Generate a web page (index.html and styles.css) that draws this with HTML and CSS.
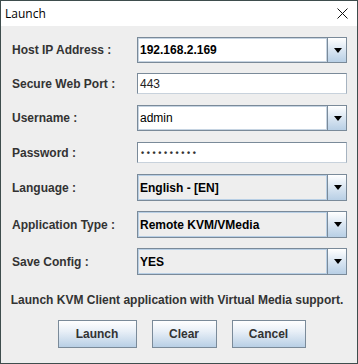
FILE: index.html
```html
<!DOCTYPE html>
<html lang="en">
<head>
    <meta charset="UTF-8">
    <title>Launch</title>
    <link rel="stylesheet" href="styles.css">
</head>
<body>
    <div class="window">
        <div class="titlebar">
            <span class="title">Launch</span>
            <svg class="close" width="11" height="11" viewBox="0 0 11 11">
                <path d="M0.5 0.5 L10.5 10.5 M10.5 0.5 L0.5 10.5" stroke="#111" stroke-width="1" fill="none"/>
            </svg>
        </div>
        <div class="content">
            <div class="row row-combo r1">
                <label>Host IP Address :</label>
                <div class="combo editable">
                    <div class="combo-text bold">192.168.2.169</div>
                    <div class="combo-btn"><span class="arrow"></span></div>
                </div>
            </div>
            <div class="row row-field r2">
                <label>Secure Web Port :</label>
                <div class="field">443</div>
            </div>
            <div class="row row-combo r3">
                <label>Username :</label>
                <div class="combo editable">
                    <div class="combo-text">admin</div>
                    <div class="combo-btn"><span class="arrow"></span></div>
                </div>
            </div>
            <div class="row row-field r4">
                <label>Password :</label>
                <div class="field password">••••••••••</div>
            </div>
            <div class="row row-select r5">
                <label>Language :</label>
                <div class="combo">
                    <div class="combo-text bold">English - [EN]</div>
                    <div class="combo-btn"><span class="arrow"></span></div>
                </div>
            </div>
            <div class="row row-select r6">
                <label>Application Type :</label>
                <div class="combo">
                    <div class="combo-text bold">Remote KVM/VMedia</div>
                    <div class="combo-btn"><span class="arrow"></span></div>
                </div>
            </div>
            <div class="row row-select r7">
                <label>Save Config :</label>
                <div class="combo">
                    <div class="combo-text bold">YES</div>
                    <div class="combo-btn"><span class="arrow"></span></div>
                </div>
            </div>

            <p class="message">Launch KVM Client application with Virtual Media support.</p>

            <div class="buttons">
                <button class="btn btn-launch">Launch</button>
                <button class="btn btn-clear">Clear</button>
                <button class="btn btn-cancel">Cancel</button>
            </div>
        </div>
    </div>
</body>
</html>
```
FILE: styles.css
```css
* {
    box-sizing: border-box;
}

body {
    margin: 0;
    font-family: "Liberation Sans", Arial, sans-serif;
    font-size: 12px;
}

.window {
    width: 358px;
    height: 364px;
    border: 1px solid #3e4d4d;
    background: #eeeeee;
    display: flex;
    flex-direction: column;
}

.titlebar {
    height: 25px;
    background: #ffffff;
    display: flex;
    align-items: center;
    justify-content: space-between;
    padding: 0 9px 0 4px;
}

.title {
    font-family: "Open Sans", "Noto Sans", sans-serif;
    font-size: 12px;
    color: #000;
}

.content {
    padding: 11px 10px 0 11px;
}

.row {
    display: flex;
    align-items: center;
}

.row label {
    width: 125px;
    font-weight: bold;
    color: #333333;
}

.r2 { margin-top: 10px; }
.r3 { margin-top: 11px; }
.r4 { margin-top: 11px; }
.r5 { margin-top: 11px; }
.r6 { margin-top: 10px; }
.r7 { margin-top: 10px; }

.combo {
    flex: 1;
    height: 27px;
    border: 1px solid #7a8a99;
    display: flex;
}

.row-combo .combo {
    height: 26px;
}

.combo-text {
    flex: 1;
    display: flex;
    align-items: center;
    padding-left: 2px;
    color: #000;
    background: #eeeeee;
    box-shadow: inset 0 0 0 1px #b8cfe5;
}

.combo.editable .combo-text {
    background: #ffffff;
    box-shadow: inset 0 0 0 1px #c6d4e2;
}

.bold {
    font-weight: bold;
}

.combo-btn {
    width: 19px;
    border-left: 1px solid #7a8a99;
    background: linear-gradient(#ffffff, #dde8f3 45%, #b8cfe5);
    display: flex;
    align-items: center;
    justify-content: center;
}

.arrow {
    width: 0;
    height: 0;
    border-left: 4.5px solid transparent;
    border-right: 4.5px solid transparent;
    border-top: 5px solid #000;
    margin-left: 1px;
}

.field {
    flex: 1;
    height: 21px;
    background: #ffffff;
    border: 1px solid #7a8a99;
    border-right-color: #a6b3c0;
    border-bottom-color: #c8d2dc;
    display: flex;
    align-items: center;
    padding-left: 2px;
    color: #222;
}

.password {
    font-size: 9px;
    font-weight: bold;
    letter-spacing: 2.6px;
    padding-left: 3px;
    padding-top: 1px;
    color: #333;
}

.message {
    margin: 18px 0 0 -5px;
    text-align: center;
    font-weight: bold;
    color: #333333;
}

.buttons {
    display: flex;
    justify-content: center;
    gap: 15px;
    margin: 13px 0 0 4px;
}

.btn {
    height: 28px;
    border: 1px solid #7a8a99;
    background: linear-gradient(#ffffff, #e8eff7 40%, #b8cfe5);
    font-family: "Liberation Sans", Arial, sans-serif;
    font-size: 12px;
    font-weight: bold;
    color: #333333;
    padding: 0;
}

.btn-launch { width: 79px; }
.btn-clear { width: 65px; }
.btn-cancel { width: 74px; }
```
